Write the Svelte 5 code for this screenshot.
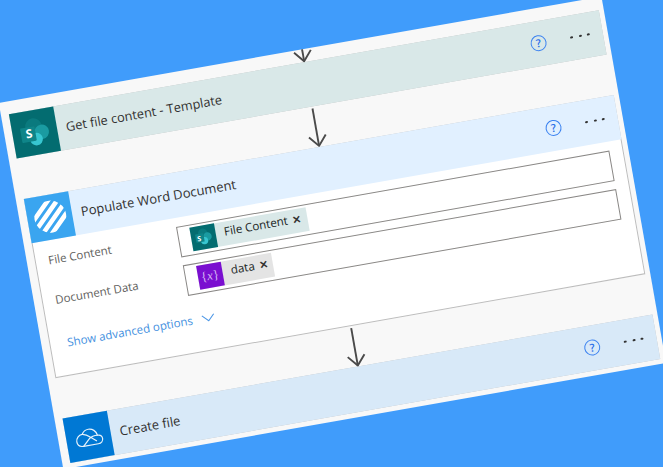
<script>
  const connector = { line: 'M10 1V39', head: 'M1.5 29L10 39L18.5 29' };
</script>

<div class="stage">
  <section class="panel">
    <div class="conn top">
      <svg width="20" height="40" viewBox="0 0 20 40" aria-hidden="true"><path d={connector.line} /><path d={connector.head} /></svg>
    </div>

    <article class="card sp">
      <header class="head">
        <span class="logo sp-bg">
          <svg width="33" height="33" viewBox="0 0 34 34" aria-hidden="true">
            <circle cx="16.5" cy="10.5" r="8.5" fill="#0a7a7e" />
            <circle cx="24" cy="17.5" r="7.5" fill="#1a9ba1" />
            <circle cx="17.5" cy="24" r="6.5" fill="#37c6d0" />
            <rect x="2.5" y="10.5" width="15" height="15" rx="1" fill="#0f8589" />
          </svg>
          <b class="s">S</b>
        </span>
        <h2 class="tight">Get file content - Template</h2>
        <span class="help">?</span>
        <span class="dots"><i></i><i></i><i></i></span>
      </header>
    </article>

    <div class="conn">
      <svg width="20" height="40" viewBox="0 0 20 40" aria-hidden="true"><path d={connector.line} /><path d={connector.head} /></svg>
    </div>

    <article class="card word">
      <header class="head">
        <span class="logo word-bg">
          <svg width="34" height="34" viewBox="0 0 34 34" aria-hidden="true">
            <defs><clipPath id="disc"><circle cx="17" cy="17" r="16" /></clipPath></defs>
            <g clip-path="url(#disc)" stroke="#fff" stroke-width="4.6">
              <path d="M-5 23.1L23.1 -5M-5 33.7L33.7 -5M-5 44.3L44.3 -5M-5 54.9L54.9 -5" />
            </g>
          </svg>
        </span>
        <h2>Populate Word Document</h2>
        <span class="help">?</span>
        <span class="dots"><i></i><i></i><i></i></span>
      </header>

      <div class="fields">
        <span class="label">File Content</span>
        <div class="box">
          <span class="chip chip-sp">
            <span class="mini sp-bg">
              <svg width="19" height="19" viewBox="0 0 34 34" aria-hidden="true">
                <circle cx="16.5" cy="10.5" r="8.5" fill="#0a7a7e" />
                <circle cx="24" cy="17.5" r="7.5" fill="#1a9ba1" />
                <circle cx="17.5" cy="24" r="6.5" fill="#37c6d0" />
                <rect x="2.5" y="10.5" width="15" height="15" rx="1" fill="#0f8589" />
              </svg>
              <b class="s small">S</b>
            </span>
            <span class="chip-text">File Content</span>
            <span class="x">✕</span>
          </span>
        </div>
        <span class="label">Document Data</span>
        <div class="box">
          <span class="chip chip-var">
            <span class="mini var-bg">{'{'}<em>x</em>{'}'}</span>
            <span class="chip-text">data</span>
            <span class="x">✕</span>
          </span>
        </div>
      </div>

      <div class="advanced">
        <span>Show advanced options</span>
        <svg width="14" height="8" viewBox="0 0 14 8" aria-hidden="true"><path d="M1 1L7 7L13 1" /></svg>
      </div>
    </article>

    <div class="conn">
      <svg width="20" height="40" viewBox="0 0 20 40" aria-hidden="true"><path d={connector.line} /><path d={connector.head} /></svg>
    </div>

    <article class="card od">
      <header class="head">
        <span class="logo od-bg">
          <svg width="30" height="24" viewBox="0 0 30 24" aria-hidden="true">
            <path d="M8 21H23C26 21 28 19 28 16.5C28 14 26 12.5 23.5 12.5C23 8 19.5 5 15.5 5C12.5 5 10 6.5 8.5 9C5 9 2 12 2 15.5C2 19 4.5 21 8 21Z" />
            <path d="M8.5 9C12 9.5 14 11 16 13L22 18M23.5 12.5C20 12 17.5 12.5 15 14.5L8 21" />
          </svg>
        </span>
        <h2>Create file</h2>
        <span class="help">?</span>
        <span class="dots"><i></i><i></i><i></i></span>
      </header>
    </article>
  </section>
</div>

<style>
  :global(body) {
    margin: 0;
    background: #409cfb;
  }
  .stage {
    width: 663px;
    height: 467px;
    overflow: hidden;
    background: #409cfb;
    font-family: "Open Sans", "Noto Sans", sans-serif;
  }
  .panel {
    box-sizing: border-box;
    width: 612px;
    height: 371.5px;
    margin: 100.5px 0 0 -19.5px;
    padding: 0 5px 0 8px;
    background: #f8f8f8;
    overflow: hidden;
    transform: rotate(-10deg);
    transform-origin: 19.5px -100.5px;
  }
  .conn {
    display: flex;
    justify-content: center;
    align-items: flex-end;
    height: 41px;
    width: 599px;
  }
  .conn.top {
    height: 12.5px;
  }
  .conn svg {
    display: block;
    fill: none;
    stroke: #4a4a4a;
    stroke-width: 1.9;
    flex: none;
  }
  .card {
    box-sizing: border-box;
    width: 599px;
    border: 1px solid #bdbdbd;
  }
  .card.sp .head { background: #d9e8e8; }
  .card.word { background: #fff; height: 182px; }
  .card.word .head { background: #e1f0ff; margin: -1px -1px 0; }
  .card.od .head { background: #d8e9f8; }
  .card.sp, .card.od { height: 45px; }
  .card.sp .head, .card.od .head { margin: -1px; }
  .head {
    display: flex;
    align-items: center;
    height: 45px;
  }
  .logo {
    position: relative;
    flex: none;
    display: flex;
    align-items: center;
    justify-content: center;
    width: 45px;
    height: 45px;
  }
  .sp-bg { background: #036c70; }
  .word-bg { background: #3aa5f0; }
  .od-bg { background: #0078d4; }
  .od-bg svg {
    fill: none;
    stroke: #e6f2fb;
    stroke-width: 1.2;
  }
  .s {
    position: absolute;
    left: 9px;
    top: 15.5px;
    color: #fff;
    font: 700 12px/15px "Open Sans", sans-serif;
    width: 15px;
    text-align: center;
  }
  .s.small {
    left: 4px;
    top: 8px;
    font-size: 7px;
    line-height: 9px;
    width: 8.5px;
  }
  h2 {
    margin: 0 0 0 9px;
    flex: 1;
    font-size: 13px;
    font-weight: 400;
    color: #323130;
    white-space: nowrap;
  }
  h2.tight {
    font-size: 12.8px;
  }
  .help {
    box-sizing: border-box;
    flex: none;
    width: 16px;
    height: 16px;
    border: 1.3px solid #3b82f0;
    border-radius: 50%;
    color: #2a6fe8;
    font: 600 11px/13.5px "Open Sans", sans-serif;
    text-align: center;
    margin-right: 24.5px;
  }
  .dots {
    flex: none;
    display: flex;
    gap: 5.6px;
    margin-right: 13px;
  }
  .dots i {
    width: 2.8px;
    height: 2.8px;
    border-radius: 50%;
    background: #333;
  }
  .fields {
    display: grid;
    grid-template-columns: 143.5px 440px;
    grid-auto-rows: 31px;
    row-gap: 8.5px;
    padding-top: 9px;
  }
  .label {
    padding: 3.5px 0 0 12.5px;
    font-size: 11.5px;
    line-height: 15px;
    color: #605e5c;
  }
  .box {
    box-sizing: border-box;
    display: flex;
    align-items: flex-start;
    padding: 2px 0 0 12px;
    border: 1px solid #8a8886;
    background: #fff;
  }
  .chip {
    display: flex;
    align-items: flex-start;
    height: 24px;
    font-size: 11.6px;
    line-height: 20px;
    color: #201f1e;
  }
  .chip-sp { background: #d9e8e8; width: 118px; }
  .chip-var { background: #e4e4e4; width: 76px; }
  .mini {
    position: relative;
    flex: none;
    display: flex;
    align-items: center;
    justify-content: center;
    width: 25px;
    height: 24px;
  }
  .var-bg {
    background: #7a0fd0;
    color: #d7b8f3;
    font: 400 13px "Liberation Serif", serif;
  }
  .chip-text { margin-left: 9px; white-space: nowrap; }
  .x {
    margin-left: 5px;
    font-size: 10.5px;
    font-weight: 600;
    color: #323130;
  }
  .advanced {
    display: flex;
    align-items: center;
    gap: 9px;
    margin-top: 17px;
    padding-left: 17px;
    font-size: 11.5px;
    line-height: 16px;
    color: #3f8fe0;
  }
  .advanced svg {
    fill: none;
    stroke: #4d97e6;
    stroke-width: 1.1;
  }
</style>
